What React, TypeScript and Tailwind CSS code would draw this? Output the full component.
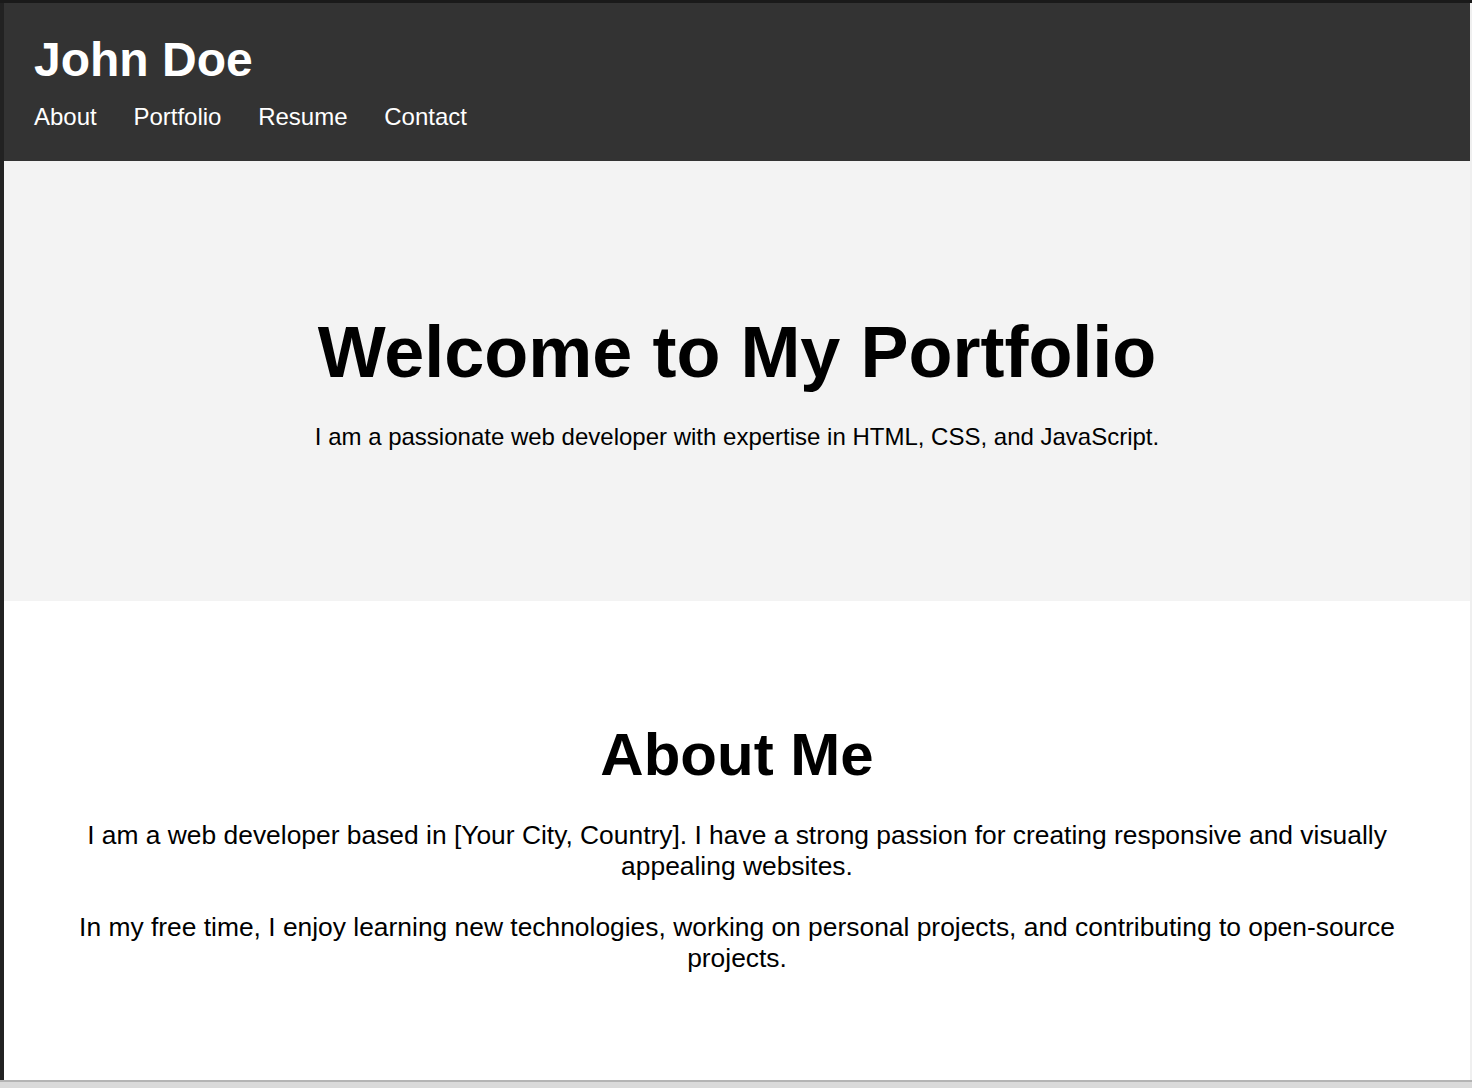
import React from "react";

const navItems = ["About", "Portfolio", "Resume", "Contact"];

const App = () => {
  return (
    <div className="w-[1472px] h-[1088px] flex flex-col overflow-hidden font-['Liberation_Sans',Arial,sans-serif] text-black">
      <div className="h-[3px] bg-[#1a1a1a]" />
      <div className="flex flex-1 min-h-0">
        <div className="w-[4px] bg-[#222222]" />
        <main className="flex-1 flex flex-col min-h-0 overflow-hidden bg-white">
          <header className="bg-[#333333] pl-[30px] pt-[29px] pb-[30px] text-white">
            <h1 className="text-[48px] leading-[55px] font-bold">John Doe</h1>
            <nav className="mt-[16px]">
              <ul className="flex gap-[36.7px] text-[24px] leading-[28px]">
                {navItems.map((item) => (
                  <li key={item}>
                    <a href={"#" + item.toLowerCase()}>{item}</a>
                  </li>
                ))}
              </ul>
            </nav>
          </header>

          <section className="bg-[#f3f3f3] py-[150px] text-center">
            <h2 className="text-[72px] leading-[83px] font-bold">Welcome to My Portfolio</h2>
            <p className="mt-[29px] text-[24px] leading-[28px]">
              I am a passionate web developer with expertise in HTML, CSS, and JavaScript.
            </p>
          </section>

          <section className="flex-1 px-[60px] pt-[119px] text-center">
            <h3 className="text-[60px] leading-[69px] font-bold">About Me</h3>
            <p className="mt-[31px] text-[26.4px] leading-[31px]">
              I am a web developer based in [Your City, Country]. I have a strong passion for creating
              responsive and visually appealing websites.
            </p>
            <p className="mt-[30px] text-[26.4px] leading-[31px]">
              In my free time, I enjoy learning new technologies, working on personal projects, and
              contributing to open-source projects.
            </p>
          </section>
        </main>
        <div className="w-[2px] bg-[#efefef]" />
      </div>
      <div className="h-[2px] bg-[#b4b4b4]" />
      <div className="h-[6px] bg-[#dadada]" />
    </div>
  );
};

export default App;
